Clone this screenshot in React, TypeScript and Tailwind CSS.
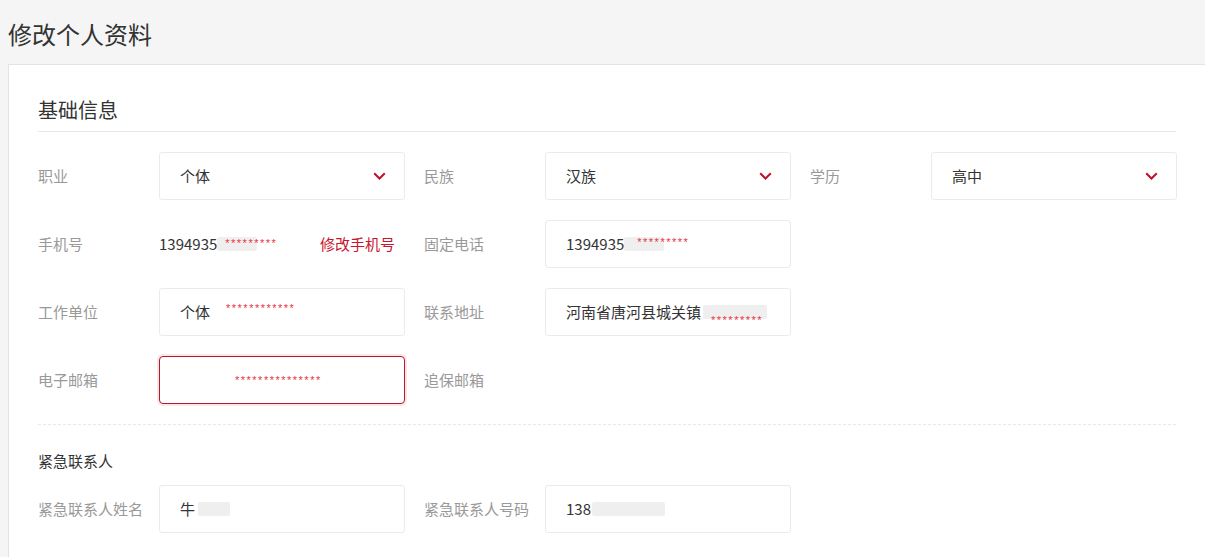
import { ReactNode } from 'react';

const font = { fontFamily: '"Noto Sans CJK SC", "Noto Sans", sans-serif' };
const starFont = { fontFamily: '"Liberation Sans", Arial, sans-serif' };

function Chevron() {
  return (
    <svg width="13" height="8" viewBox="0 0 13 8" className="shrink-0">
      <polyline points="1.2,1.2 6.5,6.5 11.8,1.2" fill="none" stroke="#c0112c" strokeWidth="2" />
    </svg>
  );
}

function Stars({ count, className = '' }: { count: number; className?: string }) {
  return (
    <span className={`text-[11px] leading-none tracking-[1.5px] text-[#e8333f] ${className}`} style={starFont}>
      {'*'.repeat(count)}
    </span>
  );
}

function Field({ label, children }: { label: string; children?: ReactNode }) {
  return (
    <div className="flex h-[48px] w-[367px] items-center">
      <div className="w-[121px] shrink-0 text-[15px] text-[#999]">{label}</div>
      {children}
    </div>
  );
}

function Box({ children, error = false }: { children?: ReactNode; error?: boolean }) {
  return (
    <div
      className={
        error
          ? 'flex h-[48px] w-[246px] items-center rounded-[4px] border border-[#b5172f] bg-white px-[20px] shadow-[0_0_0_2px_rgba(232,40,60,0.12)]'
          : 'flex h-[48px] w-[246px] items-center rounded-[3px] border border-[#ebebeb] bg-white px-[20px]'
      }
    >
      {children}
    </div>
  );
}

function Select({ value }: { value: string }) {
  return (
    <Box>
      <span className="flex-1 text-[15px] text-[#333]">{value}</span>
      <span className="-mr-[2px]">
        <Chevron />
      </span>
    </Box>
  );
}

function Blur({ w }: { w: number }) {
  return <span className="inline-block h-[14px] rounded-[2px] bg-[#efefef]" style={{ width: w }} />;
}

export default function App() {
  return (
    <div className="min-h-[557px] bg-[#f5f5f5] text-[#333]" style={font}>
      <div className="flex h-[64px] items-center pl-[8px] pt-[4px] text-[24px] text-[#333]">修改个人资料</div>

      <div className="ml-[8px] w-[1198px] border-l border-t border-[#e3e3e3] bg-white pb-[40px] pl-[29px] pr-[30px] pt-[30px]">
        <div className="h-[30px] text-[20px] leading-[30px] text-[#333]">基础信息</div>
        <div className="mt-[6px] border-b border-[#e8e8e8]" />

        <div className="mt-[20px] flex flex-col gap-[20px]">
          <div className="flex gap-[19px]">
            <Field label="职业">
              <Select value="个体" />
            </Field>
            <Field label="民族">
              <Select value="汉族" />
            </Field>
            <Field label="学历">
              <Select value="高中" />
            </Field>
          </div>

          <div className="flex gap-[19px]">
            <Field label="手机号">
              <div className="flex w-[246px] items-center pr-[10px]">
                <span className="text-[15px] text-[#333]">1394935</span>
                <span className="relative flex items-center">
                  <Blur w={40} />
                  <Stars count={9} className="absolute left-[8px] top-[1px]" />
                </span>
                <span className="ml-auto text-[15px] text-[#c7162e]">修改手机号</span>
              </div>
            </Field>
            <Field label="固定电话">
              <Box>
                <span className="text-[15px] text-[#333]">1394935</span>
                <span className="relative flex items-center">
                  <Blur w={40} />
                  <Stars count={9} className="absolute left-[13px] top-[0px]" />
                </span>
              </Box>
            </Field>
          </div>

          <div className="flex gap-[19px]">
            <Field label="工作单位">
              <Box>
                <span className="text-[15px] text-[#333]">个体</span>
                <Stars count={12} className="ml-[16px] -mt-[7px]" />
              </Box>
            </Field>
            <Field label="联系地址">
              <Box>
                <span className="text-[15px] text-[#333]">河南省唐河县城关镇</span>
                <span className="relative ml-[2px] flex items-center">
                  <Blur w={64} />
                  <Stars count={9} className="absolute left-[8px] top-[10px]" />
                </span>
              </Box>
            </Field>
          </div>

          <div className="flex gap-[19px]">
            <Field label="电子邮箱">
              <Box error>
                <Stars count={15} className="ml-[55px]" />
              </Box>
            </Field>
            <Field label="追保邮箱" />
          </div>
        </div>

        <div className="mt-[20px] border-b border-dashed border-[#e8e8e8]" />

        <div className="mt-[24px] h-[24px] text-[15px] leading-[24px] text-[#333]">紧急联系人</div>

        <div className="mt-[12px] flex gap-[19px]">
          <Field label="紧急联系人姓名">
            <Box>
              <span className="text-[15px] text-[#333]">牛</span>
              <span className="ml-[3px] flex items-center">
                <Blur w={32} />
              </span>
            </Box>
          </Field>
          <Field label="紧急联系人号码">
            <Box>
              <span className="text-[15px] text-[#333]">138</span>
              <span className="ml-[1px] flex items-center">
                <Blur w={73} />
              </span>
            </Box>
          </Field>
        </div>
      </div>
    </div>
  );
}
